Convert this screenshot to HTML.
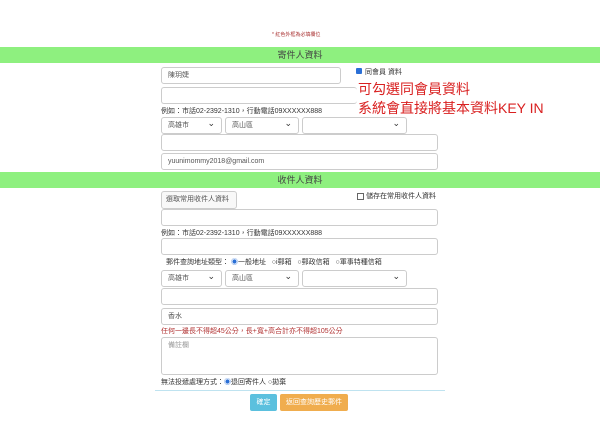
<!DOCTYPE html>
<html><head><meta charset="utf-8"><style>
body{margin:0;width:600px;height:431px;background:#fff;font-family:"Liberation Sans","Noto Sans CJK TC",sans-serif;position:relative;overflow:hidden;color:#333}
.a{position:absolute}
.in{position:absolute;border:1px solid #ccc;border-radius:3px;background:#fff;box-sizing:border-box;font-size:7px;color:#555;padding:4px 6px;line-height:8px;white-space:nowrap}
.bar{position:absolute;left:0;width:600px;height:16px;background:#8ef07f;text-align:center;font-size:9px;line-height:16px;color:#444}
.sel::after{content:"⌄";position:absolute;right:6px;top:1px;font-size:9px;color:#333}
.t{position:absolute;font-size:7px;color:#333;white-space:nowrap}
</style></head><body>
<div class="t" style="left:272px;top:31px;color:#a33;font-size:5px">* 紅色外框為必填欄位</div>
<div class="bar" style="top:47px">寄件人資料</div>
<div class="in" style="left:161px;top:67px;width:180px;height:17px">陳玥婕</div>
<div class="a" style="left:356px;top:68px;width:6px;height:6px;background:#2a6fd6;border-radius:1px"></div>
<div class="t" style="left:365px;top:67px">同會員 資料</div>
<div class="in" style="left:161px;top:87px;width:196px;height:17px;border-right:none"></div>
<div class="t" style="left:358px;top:79px;font-size:14px;color:#d92020">可勾選同會員資料</div>
<div class="t" style="left:358px;top:98px;font-size:14px;color:#d92020">系統會直接將基本資料KEY IN</div>
<div class="t" style="left:161px;top:106px">例如：市話02-2392-1310，行動電話09XXXXXX888</div>
<div class="in sel" style="left:161px;top:117px;width:61px;height:17px">高雄市</div>
<div class="in sel" style="left:225px;top:117px;width:74px;height:17px">高山區</div>
<div class="in sel" style="left:302px;top:117px;width:105px;height:17px"></div>
<div class="in" style="left:161px;top:134px;width:277px;height:17px"></div>
<div class="in" style="left:161px;top:153px;width:277px;height:17px">yuunimommy2018@gmail.com</div>
<div class="bar" style="top:172px">收件人資料</div>
<div class="in" style="left:161px;top:191px;width:76px;height:18px;background:#f8f8f8;padding:4px 4px">選取常用收件人資料</div>
<div class="a" style="left:357px;top:193px;width:5px;height:5px;border:1px solid #666"></div>
<div class="t" style="left:366px;top:191px">儲存在常用收件人資料</div>
<div class="in" style="left:161px;top:209px;width:277px;height:17px"></div>
<div class="t" style="left:161px;top:228px">例如：市話02-2392-1310，行動電話09XXXXXX888</div>
<div class="in" style="left:161px;top:238px;width:277px;height:17px"></div>
<div class="t" style="left:166px;top:257px">郵件查詢地址類型： <span style="color:#2a6fd6">◉</span>一般地址 &nbsp; ○i郵箱 &nbsp; ○郵政信箱 &nbsp; ○軍事特種信箱</div>
<div class="in sel" style="left:161px;top:270px;width:61px;height:17px">高雄市</div>
<div class="in sel" style="left:225px;top:270px;width:74px;height:17px">高山區</div>
<div class="in sel" style="left:302px;top:270px;width:105px;height:17px"></div>
<div class="in" style="left:161px;top:288px;width:277px;height:17px"></div>
<div class="in" style="left:161px;top:308px;width:277px;height:17px">香水</div>
<div class="t" style="left:161px;top:326px;color:#b03030">任何一邊長不得超45公分，長+寬+高合計亦不得超105公分</div>
<div class="in" style="left:161px;top:337px;width:277px;height:38px;color:#999">備註欄</div>
<div class="t" style="left:161px;top:377px">無法投遞處理方式：<span style="color:#2a6fd6">◉</span>退回寄件人 ○拋棄</div>
<div class="a" style="left:155px;top:390px;width:290px;height:1px;background:#bfe3f0"></div>
<div class="a" style="left:250px;top:394px;width:27px;height:17px;background:#5bc0de;border-radius:2px;color:#fff;font-size:7px;text-align:center;line-height:17px">確定</div>
<div class="a" style="left:280px;top:394px;width:68px;height:17px;background:#f0ad4e;border-radius:2px;color:#fff;font-size:7px;text-align:center;line-height:17px">返回查詢歷史郵件</div>
</body></html>
